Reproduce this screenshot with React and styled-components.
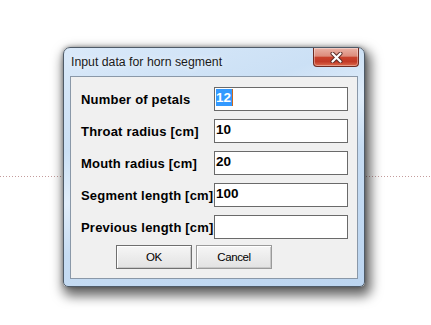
import React from "react";
import styled, { createGlobalStyle } from "styled-components";

const Global = createGlobalStyle`
  html, body { margin: 0; padding: 0; background: #ffffff; }
  body { width: 431px; height: 325px; overflow: hidden; font-family: "Liberation Sans", Arial, sans-serif; }
`;

const Page = styled.div`
  width: 431px;
  height: 325px;
  box-sizing: border-box;
  padding: 47px 0 0 63px;
  background-image: repeating-linear-gradient(to right, #c49c9c 0 1px, transparent 1px 3px);
  background-size: 100% 1px;
  background-position: 0 176px;
  background-repeat: no-repeat;
`;

const Frame = styled.div`
  width: 302px;
  height: 240px;
  box-sizing: border-box;
  border: 1px solid #4f5b68;
  border-radius: 7px 7px 5px 5px;
  background: linear-gradient(160deg, #dae9f9 0%, #cbe0f5 30%, #e0edfa 45%, #c6dcf3 60%, #bcd5f0 100%);
  box-shadow: 3px 6px 12px 3px rgba(0, 0, 0, 0.6), 0 0 4px rgba(0, 0, 0, 0.35);
  display: flex;
  flex-direction: column;
`;

const TitleBar = styled.div`
  height: 28px;
  display: flex;
  justify-content: space-between;
  align-items: flex-start;
  padding: 0 5px 0 7px;
`;

const Title = styled.div`
  font-family: "Liberation Sans", Arial, sans-serif;
  font-size: 12.3px;
  line-height: 14px;
  color: #1a1a1a;
  padding-top: 7px;
  text-shadow: 0 0 6px rgba(255, 255, 255, 0.9);
`;

const CloseButton = styled.div`
  width: 46px;
  height: 19px;
  box-sizing: border-box;
  border: 1px solid #6e2b22;
  border-top: none;
  border-radius: 0 0 4px 4px;
  background: linear-gradient(to bottom, #eab2a6 0%, #dd8c7c 45%, #c8412c 52%, #c23a26 75%, #dc6a4c 100%);
  box-shadow: inset 0 0 0 1px rgba(255, 255, 255, 0.35);
  display: flex;
  align-items: center;
  justify-content: center;
`;

const Client = styled.div`
  margin: 0 6px;
  height: 203px;
  box-sizing: border-box;
  border: 1px solid #8a98a8;
  background: #f0f0f0;
  padding: 10px 9px 9px 10px;
  display: flex;
  flex-direction: column;
`;

const Form = styled.div`
  display: grid;
  grid-template-columns: 133px 134px;
  grid-auto-rows: 24px;
  row-gap: 8px;
  align-items: center;
`;

const Label = styled.div`
  font-family: "Liberation Sans", Arial, sans-serif;
  font-weight: bold;
  font-size: 13px;
  letter-spacing: 0.2px;
  color: #000;
  white-space: nowrap;
`;

const Field = styled.div`
  height: 24px;
  box-sizing: border-box;
  border: 1px solid #6a6a6a;
  background: #fff;
  padding: 1px 1px 0 1px;
  font-family: "Liberation Sans", Arial, sans-serif;
  font-weight: bold;
  font-size: 13.5px;
  line-height: 17px;
  color: #000;
  display: flex;
  align-items: flex-start;
`;

const Selected = styled.span`
  background: #3399ff;
  color: #fff;
  padding-right: 1px;
`;

const Caret = styled.span`
  width: 1px;
  height: 17px;
  background: #cc6a1e;
`;

const Buttons = styled.div`
  display: flex;
  gap: 4px;
  margin: 6px 0 0 35px;
`;

const Button = styled.div`
  width: 76px;
  height: 24px;
  box-sizing: border-box;
  border: 1px solid ${(p) => (p.$default ? "#6f6f6f" : "#9a9a9a")};
  background: linear-gradient(to bottom, #f6f6f6 0%, #ececec 50%, #e2e2e2 100%);
  box-shadow: inset 1px 1px 0 #ffffff, inset -1px -1px 0 #c8c8c8;
  display: flex;
  align-items: center;
  justify-content: center;
  font-family: "Liberation Sans", Arial, sans-serif;
  font-size: 11.5px;
  letter-spacing: -0.4px;
  color: #000;
`;

const rows = [
  { label: "Number of petals", value: "12", selected: true },
  { label: "Throat radius [cm]", value: "10" },
  { label: "Mouth radius [cm]", value: "20" },
  { label: "Segment length [cm]", value: "100" },
  { label: "Previous length [cm]", value: "" },
];

export default function App() {
  return (
    <>
      <Global />
      <Page>
        <Frame>
          <TitleBar>
            <Title>Input data for horn segment</Title>
            <CloseButton>
              <svg width="13" height="11" viewBox="0 0 13 11">
                <path d="M2.5 1.5 L10.5 9.5 M10.5 1.5 L2.5 9.5" stroke="#5a2a24" strokeWidth="4" strokeLinecap="round" fill="none" />
                <path d="M2.5 1.5 L10.5 9.5 M10.5 1.5 L2.5 9.5" stroke="#ffffff" strokeWidth="2.2" strokeLinecap="round" fill="none" />
              </svg>
            </CloseButton>
          </TitleBar>
          <Client>
            <Form>
              {rows.map((r) => (
                <React.Fragment key={r.label}>
                  <Label>{r.label}</Label>
                  <Field>
                    {r.selected ? (
                      <>
                        <Selected>{r.value}</Selected>
                        <Caret />
                      </>
                    ) : (
                      r.value
                    )}
                  </Field>
                </React.Fragment>
              ))}
            </Form>
            <Buttons>
              <Button $default>OK</Button>
              <Button>Cancel</Button>
            </Buttons>
          </Client>
        </Frame>
      </Page>
    </>
  );
}
